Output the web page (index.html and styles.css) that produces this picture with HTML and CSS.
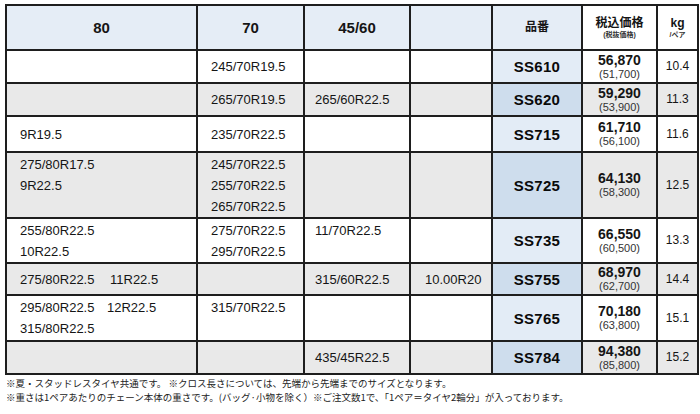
FILE: index.html
```html
<!DOCTYPE html>
<html lang="ja">
<head>
<meta charset="utf-8">
<link rel="stylesheet" href="styles.css">
</head>
<body>
<table class="spec">
  <colgroup>
    <col class="c1"><col class="c2"><col class="c3"><col class="c4"><col class="c5"><col class="c6"><col class="c7">
  </colgroup>
  <thead>
    <tr class="h-head">
      <th class="hb">80</th>
      <th class="hb">70</th>
      <th class="hb">45/60</th>
      <th class="hb"></th>
      <th class="hb jp">品番</th>
      <th class="jp"><span class="t-main">税込価格</span><span class="t-sub">(税抜価格)</span></th>
      <th class="jp"><span class="k-main">kg</span><span class="k-sub">/ペア</span></th>
    </tr>
  </thead>
  <tbody>
    <tr class="h34">
      <td></td><td>245/70R19.5</td><td class="c3t"></td><td></td>
      <td class="code">SS610</td>
      <td class="price"><span class="p-main">56,870</span><span class="p-sub">(51,700)</span></td>
      <td class="kg">10.4</td>
    </tr>
    <tr class="h34 gray">
      <td></td><td>265/70R19.5</td><td class="c3t">265/60R22.5</td><td></td>
      <td class="code">SS620</td>
      <td class="price"><span class="p-main">59,290</span><span class="p-sub">(53,900)</span></td>
      <td class="kg">11.3</td>
    </tr>
    <tr class="h37">
      <td>9R19.5</td><td>235/70R22.5</td><td class="c3t"></td><td></td>
      <td class="code">SS715</td>
      <td class="price"><span class="p-main">61,710</span><span class="p-sub">(56,100)</span></td>
      <td class="kg">11.6</td>
    </tr>
    <tr class="h63 gray">
      <td class="top">275/80R17.5<br>9R22.5</td>
      <td class="top">245/70R22.5<br>255/70R22.5<br>265/70R22.5</td>
      <td class="c3t"></td><td></td>
      <td class="code">SS725</td>
      <td class="price"><span class="p-main">64,130</span><span class="p-sub">(58,300)</span></td>
      <td class="kg">12.5</td>
    </tr>
    <tr class="h44">
      <td class="top">255/80R22.5<br>10R22.5</td>
      <td class="top">275/70R22.5<br>295/70R22.5</td>
      <td class="top c3t">11/70R22.5</td><td></td>
      <td class="code">SS735</td>
      <td class="price"><span class="p-main">66,550</span><span class="p-sub">(60,500)</span></td>
      <td class="kg">13.3</td>
    </tr>
    <tr class="h33 gray">
      <td><span class="pair">275/80R22.5</span>11R22.5</td>
      <td></td><td class="c3t">315/60R22.5</td><td class="c4t">10.00R20</td>
      <td class="code">SS755</td>
      <td class="price"><span class="p-main">68,970</span><span class="p-sub">(62,700)</span></td>
      <td class="kg">14.4</td>
    </tr>
    <tr class="h47">
      <td class="top"><span class="pair pair7">295/80R22.5</span>12R22.5<br>315/80R22.5</td>
      <td class="top">315/70R22.5</td>
      <td class="c3t"></td><td></td>
      <td class="code">SS765</td>
      <td class="price"><span class="p-main">70,180</span><span class="p-sub">(63,800)</span></td>
      <td class="kg">15.1</td>
    </tr>
    <tr class="h34 gray">
      <td></td><td></td><td class="c3t">435/45R22.5</td><td></td>
      <td class="code">SS784</td>
      <td class="price"><span class="p-main">94,380</span><span class="p-sub">(85,800)</span></td>
      <td class="kg">15.2</td>
    </tr>
  </tbody>
</table>
<p class="notes">※夏・スタッドレスタイヤ共通です。 ※クロス長さについては、先端から先端までのサイズとなります。<br>※重さは1ペアあたりのチェーン本体の重さです。(バッグ·小物を除く）※ご注文数1で、「1ペア＝タイヤ2輪分」が入っております。</p>
</body>
</html>
```

FILE: styles.css
```css
html, body {
  margin: 0;
  padding: 0;
  background: #ffffff;
}
body {
  padding: 4px 0 0 5px;
  font-family: "Liberation Sans", Arial, "Noto Sans CJK JP", sans-serif;
  color: #151515;
}
.spec {
  border-collapse: collapse;
  table-layout: fixed;
  width: 694px;
}
.c1 { width: 191px; }
.c2 { width: 107px; }
.c3 { width: 106px; }
.c4 { width: 82px; }
.c5 { width: 90px; }
.c6 { width: 75px; }
.c7 { width: 41px; }

.spec th, .spec td {
  border: 2px solid #1e1e1e;
  padding: 0 0 0 13px;
  font-size: 13px;
  line-height: 21px;
  font-weight: normal;
  text-align: left;
  vertical-align: middle;
  white-space: nowrap;
  overflow: hidden;
}
.h-head { height: 45px; }
.h33 { height: 32px; }
.h34 { height: 33px; }
.h37 { height: 36px; }
.h44 { height: 43px; }
.h47 { height: 46px; }
.h63 { height: 62px; }

.spec th {
  padding: 0;
  text-align: center;
  font-weight: bold;
  background: #ffffff;
}
.spec th.hb {
  background: #e5edf6;
  font-size: 15px;
}
.jp {
  font-family: "Liberation Sans", Arial, "Noto Sans CJK JP", sans-serif;
}
.spec th.hb.jp { font-size: 12px; }
.t-main, .k-main {
  display: block;
  font-size: 12px;
  line-height: 13px;
  font-weight: bold;
}
.t-sub, .k-sub {
  display: block;
  font-size: 7px;
  line-height: 9px;
  font-weight: bold;
  color: #333;
}

.gray td { background: #e9e9e9; }
.spec td.top {
  vertical-align: top;
  padding-top: 1px;
}
.spec td.c3t { padding-left: 10px; }
.spec td.c4t { padding-left: 14px; }
.pair { display: inline-block; width: 90px; }
.pair7 { width: 87px; }

.spec td.code {
  padding: 0;
  text-align: center;
  font-size: 15px;
  font-weight: bold;
  letter-spacing: 0.3px;
  background: #e3ecf6;
  color: #0a0a0a;
}
.gray td.code { background: #cedded; }

.spec td.price {
  padding: 0;
  text-align: center;
}
.p-main {
  display: block;
  font-size: 14px;
  line-height: 15px;
  font-weight: bold;
}
.p-sub {
  display: block;
  font-size: 11px;
  line-height: 13px;
  color: #333;
}
.spec td.kg {
  padding: 0;
  text-align: center;
  font-size: 12px;
}

.notes {
  margin: 2px 0 0 1px;
  font-family: "Noto Sans CJK JP", sans-serif;
  font-size: 9.5px;
  line-height: 13.5px;
  color: #222;
}
```
